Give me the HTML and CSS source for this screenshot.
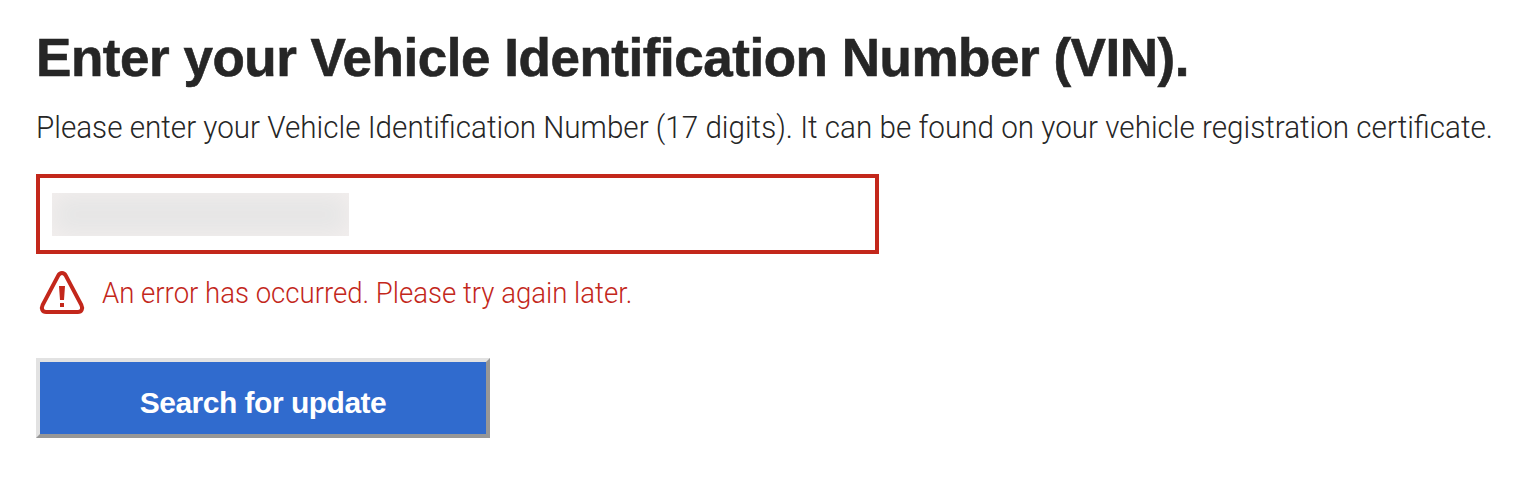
FILE: index.html
```html
<!DOCTYPE html>
<html lang="en">
<head>
<meta charset="utf-8">
<title>Vehicle update search</title>
<link rel="stylesheet" href="styles.css">
</head>
<body>
<main class="vin-form">
  <h1 class="title">Enter your Vehicle Identification Number (VIN).</h1>
  <p class="hint">Please enter your Vehicle Identification Number (17 digits). It can be found on your vehicle registration certificate.</p>
  <div class="vin-field"><span class="vin-mask"></span></div>
  <div class="error" role="alert">
    <svg class="error-icon" width="46" height="46" viewBox="0 0 46 46" aria-hidden="true">
      <path d="M19.2 5.6 L3.7 34.9 C1.8 38.7 3.4 42 7.2 42 H38.8 C42.6 42 44.2 38.7 42.3 34.9 L26.8 5.6 C25 2.1 21 2.1 19.2 5.6 Z" fill="none" stroke="currentColor" stroke-width="4"/>
      <path d="M20 16 H26 L25 30 H21 Z M21 33 H25 V37 H21 Z" fill="currentColor"/>
    </svg>
    <span class="error-text">An error has occurred. Please try again later.</span>
  </div>
  <button class="search" type="button"><span class="search-text">Search for update</span></button>
</main>
</body>
</html>
```

FILE: styles.css
```css
body { margin: 0; overflow: hidden; background: #fff; color: #262626; font-family: Roboto, sans-serif; }
.vin-form { display: flex; flex-direction: column; align-items: flex-start; padding: 28px 0 0 36px; white-space: nowrap; }
.title { margin: 0; font: bold 53px/60px "Liberation Sans", sans-serif; letter-spacing: -0.47px; -webkit-text-stroke: 0.6px currentColor; }
.hint { width: 1460px; margin: 19px 0 0; font-size: 32px; line-height: 40px; font-weight: 300; transform: scaleX(0.926); transform-origin: left; }
.vin-field { box-sizing: border-box; width: 843px; height: 80px; margin-top: 27px; padding: 15px 12px; border: 4px solid #c3271b; }
.vin-mask { display: block; width: 297px; height: 43px; background: #e6e6e6; box-shadow: inset 0 0 24px #f5f0ef; }
.error { display: flex; align-items: center; gap: 17px; height: 46px; margin: 16px 0 0 3px; color: #c3271b; }
.error-text { font-size: 30px; font-weight: 300; line-height: 40px; transform: scaleX(0.9185); transform-origin: left; }
.search { box-sizing: border-box; width: 454px; height: 80px; margin: 42px 0 0; padding: 10px 0 0; border: 4px solid; border-color: #e2e2e2 #979797 #979797 #e2e2e2; background: #306bce; color: #fff; font: bold 30px/40px "Liberation Sans", sans-serif; letter-spacing: -0.5px; }
```
